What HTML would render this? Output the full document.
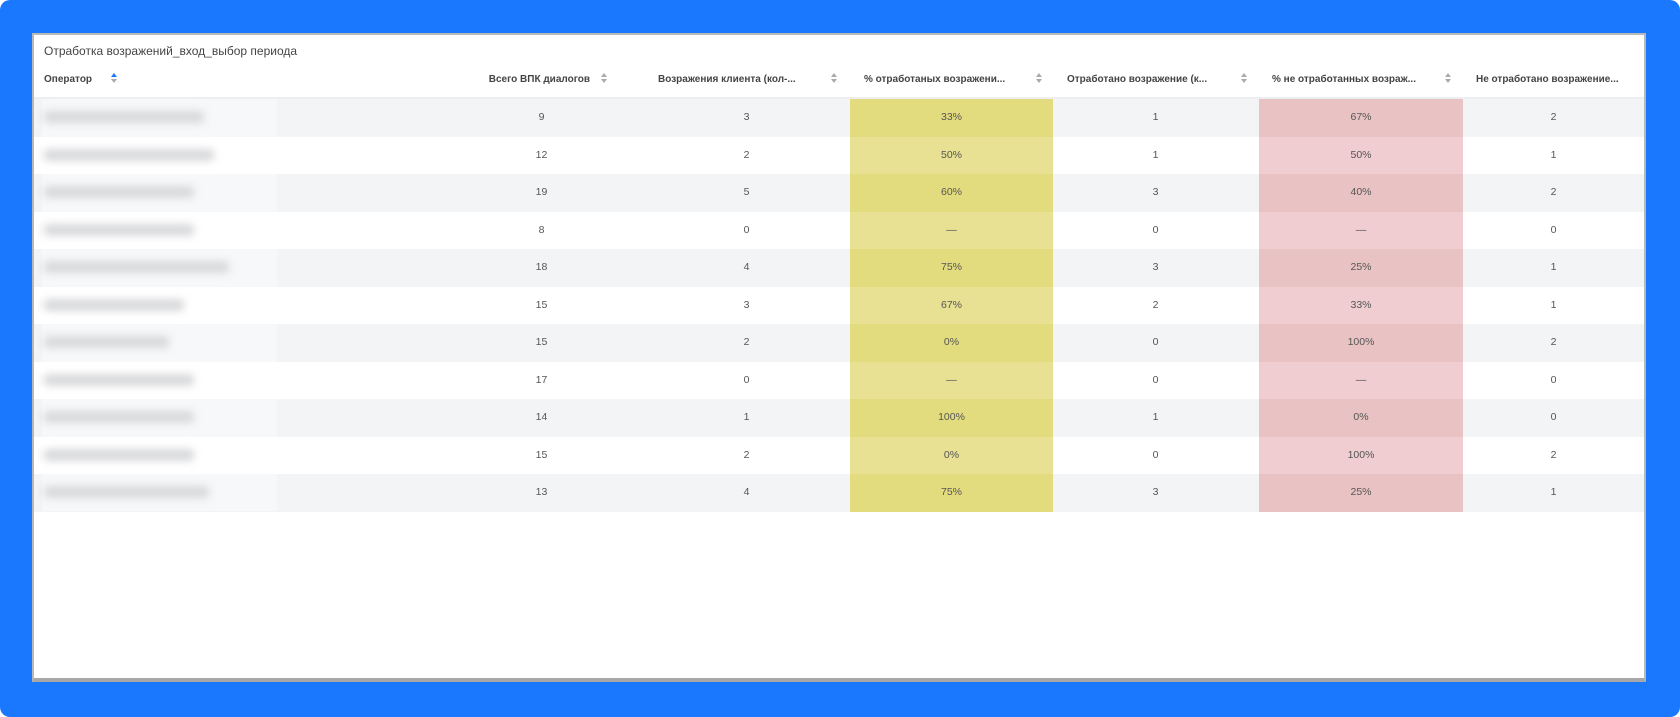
<!DOCTYPE html>
<html><head><meta charset="utf-8"><style>
*{margin:0;padding:0;box-sizing:border-box}
html{background:#fff}
body{width:1680px;height:717px;background:#1a78fe;position:relative;overflow:hidden;font-family:"Liberation Sans",sans-serif;color:#555;border-radius:10px}
#panel{position:absolute;left:32px;top:33px;width:1614px;height:649px;background:#fff;border:2px solid #b8b8b8;border-bottom:4px solid #a8a8a8}
.t{position:absolute;left:10px;top:9px;font-size:12px;color:#444}
.h{position:absolute;top:39px;font-size:10px;font-weight:bold;color:#444;white-space:nowrap;overflow:hidden;text-overflow:ellipsis}
.ic{position:absolute;top:36px;width:8px;height:14px}
.hl{position:absolute;left:0;right:0;top:62px;height:2px;background:#eceef1}
.row{position:absolute;left:0;width:1610px;height:37.5px}
.odd{background:#f3f4f6}
.c{position:absolute;top:0;height:37.5px;line-height:37.5px;text-align:center;font-size:10.5px;color:#555}
.y1{background:#e3dc7e}.y2{background:#e8e092}
.p1{background:#e9c3c3}.p2{background:#efcdd0}
.nm{position:absolute;left:10px;top:12px;height:12px;background:#c4c6ca;filter:blur(4px);border-radius:4px}
.mask{position:absolute;left:8px;top:64px;width:235px;height:412px;background:rgba(255,255,255,0.35)}
</style></head><body>
<div id="panel">
<div class="t">Отработка возражений_вход_выбор периода</div>
<div class="h" style="left:10px">Оператор</div>
<svg class="ic" style="left:76px" viewBox="0 0 8 14"><path d="M1 6 L4 2 L7 6Z" fill="#1a78fe"/><path d="M1 8 L4 12 L7 8Z" fill="#aaa"/></svg>
<div class="h" style="left:446px;width:110px;text-align:right">Всего ВПК диалогов</div>
<svg class="ic" style="left:566px" viewBox="0 0 8 14"><path d="M1 6 L4 2 L7 6Z" fill="#aaa"/><path d="M1 8 L4 12 L7 8Z" fill="#aaa"/></svg>
<div class="h" style="left:624px;width:158px">Возражения клиента (кол-...</div>
<svg class="ic" style="left:796px" viewBox="0 0 8 14"><path d="M1 6 L4 2 L7 6Z" fill="#aaa"/><path d="M1 8 L4 12 L7 8Z" fill="#aaa"/></svg>
<div class="h" style="left:830px;width:156px">% отработаных возражени...</div>
<svg class="ic" style="left:1001px" viewBox="0 0 8 14"><path d="M1 6 L4 2 L7 6Z" fill="#aaa"/><path d="M1 8 L4 12 L7 8Z" fill="#aaa"/></svg>
<div class="h" style="left:1033px;width:158px">Отработано возражение (к...</div>
<svg class="ic" style="left:1206px" viewBox="0 0 8 14"><path d="M1 6 L4 2 L7 6Z" fill="#aaa"/><path d="M1 8 L4 12 L7 8Z" fill="#aaa"/></svg>
<div class="h" style="left:1238px;width:160px">% не отработанных возраж...</div>
<svg class="ic" style="left:1410px" viewBox="0 0 8 14"><path d="M1 6 L4 2 L7 6Z" fill="#aaa"/><path d="M1 8 L4 12 L7 8Z" fill="#aaa"/></svg>
<div class="h" style="left:1442px;width:162px">Не отработано возражение...</div>
<div class="hl"></div>
<div id="rows"></div>
<div class="mask"></div>
</div>
<script>
var d=[["9","3","33%","1","67%","2",160],["12","2","50%","1","50%","1",170],["19","5","60%","3","40%","2",150],["8","0","—","0","—","0",150],["18","4","75%","3","25%","1",185],["15","3","67%","2","33%","1",140],["15","2","0%","0","100%","2",125],["17","0","—","0","—","0",150],["14","1","100%","1","0%","0",150],["15","2","0%","0","100%","2",150],["13","4","75%","3","25%","1",165]];
var h="";var cx=[[405,205],[610,205],[816,203],[1019,205],[1225,204],[1429,181]];
d.forEach(function(r,i){var o=i%2==0;h+='<div class="row'+(o?' odd':'')+'" style="top:'+(64+i*37.5)+'px">';
h+='<div class="nm" style="width:'+r[6]+'px"></div>';
for(var j=0;j<6;j++){var cl='';if(j==2)cl=o?' y1':' y2';if(j==4)cl=o?' p1':' p2';
h+='<div class="c'+cl+'" style="left:'+cx[j][0]+'px;width:'+cx[j][1]+'px">'+r[j]+'</div>';}
h+='</div>';});
document.getElementById('rows').innerHTML=h;
</script>
</body></html>
